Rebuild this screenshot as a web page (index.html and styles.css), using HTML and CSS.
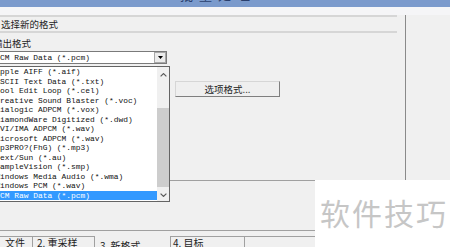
FILE: index.html
```html
<!DOCTYPE html>
<html lang="zh">
<head>
<meta charset="utf-8">
<title>批量处理</title>
<link rel="stylesheet" href="styles.css">
</head>
<body>
<div class="window">
  <div class="titlebar"><span class="title">批量处理</span></div>
  <div class="band"></div>
  <div class="upper">
    <div class="left">
      <div class="heading">选择新的格式</div>
      <div class="label">输出格式</div>
      <div class="combo-wrap">
        <div class="combo">
          <span class="combo-text">PCM Raw Data (*.pcm)</span>
          <span class="combo-btn"><svg width="5" height="3" viewBox="0 0 5 3"><path d="M0 0H5L2.5 3Z" fill="#000"/></svg></span>
        </div>
        <div class="listbox">
          <ul class="items">
            <li>Apple AIFF (*.aif)</li>
            <li>ASCII Text Data (*.txt)</li>
            <li>Cool Edit Loop (*.cel)</li>
            <li>Creative Sound Blaster (*.voc)</li>
            <li>Dialogic ADPCM (*.vox)</li>
            <li>DiamondWare Digitized (*.dwd)</li>
            <li>DVI/IMA ADPCM (*.wav)</li>
            <li>Microsoft ADPCM (*.wav)</li>
            <li>mp3PRO?(FhG) (*.mp3)</li>
            <li>Next/Sun (*.au)</li>
            <li>SampleVision (*.smp)</li>
            <li>Windows Media Audio (*.wma)</li>
            <li>Windows PCM (*.wav)</li>
            <li class="sel">PCM Raw Data (*.pcm)</li>
          </ul>
          <div class="scrollbar">
            <div class="sb-up"><svg width="7" height="4" viewBox="0 0 7 4"><path d="M0.6 3.4L3.5 0.6L6.4 3.4" fill="none" stroke="#5a5a5a" stroke-width="1.2"/></svg></div>
            <div class="sb-track"><div class="sb-thumb"></div></div>
            <div class="sb-down"><svg width="7" height="4" viewBox="0 0 7 4"><path d="M0.6 0.6L3.5 3.4L6.4 0.6" fill="none" stroke="#5a5a5a" stroke-width="1.2"/></svg></div>
          </div>
        </div>
      </div>
      <div class="btn-row"><button class="btn">选项格式...</button></div>
    </div>
    <div class="right"></div>
  </div>
  <div class="gap"></div>
  <div class="tabs">
    <div class="tab tab1">文件</div>
    <div class="tab tab2">2. 重采样</div>
    <div class="tab tab3">3. 新格式</div>
    <div class="tab tab4">4. 目标</div>
    <div class="tab tab5"></div>
  </div>
  <div class="watermark">软件技巧</div>
</div>
</body>
</html>
```
FILE: styles.css
```css
* { box-sizing: border-box; margin: 0; padding: 0; }
html, body { width: 450px; height: 247px; overflow: hidden; }
body {
  background: #f0f0f0;
  font-family: "Noto Sans CJK SC", "Noto Sans", sans-serif;
  color: #1e1e1e;
}
.window {
  position: relative;
  width: 450px;
  height: 247px;
  overflow: hidden;
  display: flex;
  flex-direction: column;
}
.titlebar {
  height: 7px;
  flex: none;
  background: #7b9acc;
  overflow: hidden;
  padding-left: 180px;
}
.title {
  display: block;
  font-size: 13px;
  line-height: 13px;
  margin-top: -12px;
  color: #2a3f6e;
  letter-spacing: 6px;
  white-space: nowrap;
}
.band { height: 8px; flex: none; background: #f5f5f7; }
.upper { display: flex; height: 166px; flex: none; }
.left {
  width: 406px;
  flex: none;
  border-right: 1px solid #8a8a8a;
  border-bottom: 1px solid #a0a0a0;
}
.right { flex: 1; }
.heading {
  margin-right: 8px;
  border-top: 2px solid #d6d6d6;
  border-bottom: 2px solid #d6d6d6;
  height: 18px;
  line-height: 14px;
  font-size: 9.5px;
  padding-left: 1px;
  white-space: nowrap;
}
.label {
  margin-top: 4px;
  margin-left: -7px;
  height: 12px;
  line-height: 12px;
  font-size: 9.5px;
  white-space: nowrap;
}
.combo-wrap {
  position: relative;
  margin-top: 2px;
  margin-left: -7px;
  width: 174px;
}
.combo {
  height: 13px;
  border: 1px solid #7a7a7a;
  background: #fff;
  display: flex;
  align-items: center;
}
.combo-text, .items {
  font-family: "Liberation Mono", monospace;
  font-size: 7.9px;
  color: #111;
  white-space: nowrap;
}
.combo-text { flex: 1; padding-left: 1.3px; line-height: 11px; }
.combo-btn {
  width: 12px;
  height: 11px;
  border: 1px solid #a8a8a8;
  background: #ececec;
  display: flex;
  align-items: center;
  justify-content: center;
}
.combo-btn svg { display: block; }
.listbox {
  position: absolute;
  top: 15px;
  left: 0;
  width: 177px;
  height: 136px;
  border: 1px solid #646464;
  background: #fff;
  display: flex;
  z-index: 2;
}
.items { flex: 1; list-style: none; overflow: hidden; }
.items li { height: 9.5px; line-height: 9.5px; padding-left: 1.3px; }
.items li.sel {
  background: #3399ff;
  color: #fff;
}
.scrollbar {
  width: 12px;
  flex: none;
  display: flex;
  flex-direction: column;
  background: #f0f0f0;
}
.sb-up, .sb-down {
  display: flex;
  align-items: center;
  justify-content: center;
  flex: none;
}
.sb-up { height: 16px; }
.sb-down { height: 12px; }
.sb-up svg, .sb-down svg { display: block; }
.sb-track { flex: 1; }
.sb-thumb { margin-top: 25px; height: 79px; background: #cdcdcd; }
.btn-row { margin-top: 17px; padding-left: 175px; }
.btn {
  display: block;
  width: 105px;
  height: 16px;
  font-family: "Noto Sans CJK SC", "Noto Sans", sans-serif;
  font-size: 9.5px;
  line-height: 14px;
  color: #1e1e1e;
  background: #efefef;
  border: 1px solid;
  border-color: #d6d6d6 #7f7f7f #7f7f7f #d6d6d6;
}
.gap { height: 49px; flex: none; }
.tabs {
  height: 17px;
  flex: none;
  border-top: 1px solid #a0a0a0;
  display: flex;
  align-items: flex-start;
  font-size: 10px;
  line-height: 12px;
  white-space: nowrap;
}
.tab { height: 16px; }
.tab1 {
  width: 33px;
  margin-top: 5px;
  padding-left: 5px;
  border-top: 1px solid #a0a0a0;
  border-right: 1px solid #a0a0a0;
}
.tab2 {
  width: 62px;
  margin-top: 5px;
  padding-left: 4px;
  border-top: 1px solid #a0a0a0;
  border-right: 1px solid #a0a0a0;
}
.tab3 { width: 75px; margin-top: 9px; padding-left: 5px; }
.tab4 {
  width: 75px;
  margin-top: 5px;
  padding-left: 2px;
  border: 1px solid #a0a0a0;
  border-bottom: none;
}
.tab5 { flex: 1; margin-top: 5px; border-top: 1px solid #a0a0a0; }
.watermark {
  position: absolute;
  left: 315px;
  top: 180px;
  right: 0;
  bottom: 0;
  background: #fff;
  color: #c6c6c6;
  font-size: 30px;
  line-height: 30px;
  padding-top: 17px;
  padding-left: 5px;
  letter-spacing: 2px;
  white-space: nowrap;
  z-index: 3;
}
```
